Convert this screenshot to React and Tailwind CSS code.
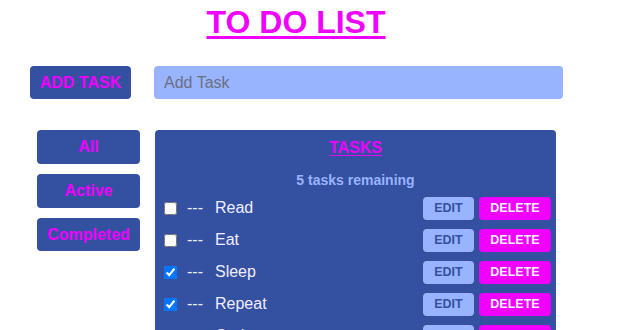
import React from "react";

const tasks = [
  { name: "Read", done: false },
  { name: "Eat", done: false },
  { name: "Sleep", done: true },
  { name: "Repeat", done: true },
  { name: "Code", done: false },
];

export default function App() {
  return (
    <div className="w-[629px] h-[330px] overflow-hidden bg-white" style={{ fontFamily: '"Liberation Sans", Arial, sans-serif' }}>
      <div className="w-[592px] flex justify-center pt-[4px]">
        <h1 className="text-[32px] font-bold leading-[37px] text-[#f000ff] underline decoration-[3px] underline-offset-[3px]">TO DO LIST</h1>
      </div>
      <div className="flex items-center mt-[25px] pl-[30px]">
        <button className="w-[101px] h-[33px] rounded-[4px] bg-[#3450a1] text-[#f000ff] font-bold text-[16px]">ADD TASK</button>
        <input
          className="ml-[23px] w-[409px] h-[33px] rounded-[4px] bg-[#99b4ff] pl-[10px] text-[16px] text-gray-700 placeholder:text-[#6b6f80] outline-none"
          placeholder="Add Task"
        />
      </div>
      <div className="flex mt-[31px] pl-[37px]">
        <div className="flex flex-col gap-[10px] w-[103px]">
          <button className="h-[34px] rounded-[4px] bg-[#3450a1] text-[#f000ff] font-bold text-[16px]">All</button>
          <button className="h-[34px] rounded-[4px] bg-[#3450a1] text-[#f000ff] font-bold text-[16px]">Active</button>
          <button className="h-[33px] rounded-[4px] bg-[#3450a1] text-[#f000ff] font-bold text-[16px]">Completed</button>
        </div>
        <div className="ml-[15px] w-[401px] h-[260px] rounded-t-[4px] bg-[#3450a1] pt-[9px]">
          <div className="flex justify-center">
            <span className="text-[16px] font-bold text-[#f000ff] underline underline-offset-[2px] leading-[18px]">TASKS</span>
          </div>
          <div className="text-center text-[14px] font-bold text-[#99b4ff] mt-[15px] leading-[16px]">5 tasks remaining</div>
          <div className="mt-[4px] flex flex-col">
            {tasks.map((t) => (
              <div key={t.name} className="h-[32px] flex items-center pr-[5px]">
                <input type="checkbox" defaultChecked={t.done} className="ml-[9px] w-[13px] h-[13px]" />
                <span className="ml-[10px] text-[16px] text-[#eeeeff]">---</span>
                <span className="ml-[12px] text-[16px] text-[#eeeeff]">{t.name}</span>
                <div className="ml-auto flex gap-[5px]">
                  <button className="w-[51px] h-[23px] rounded-[4px] bg-[#99b4ff] text-[#3450a1] font-bold text-[12.5px]">EDIT</button>
                  <button className="w-[72px] h-[23px] rounded-[4px] bg-[#f000ff] text-[#f4f0ff] font-bold text-[12.5px]">DELETE</button>
                </div>
              </div>
            ))}
          </div>
        </div>
      </div>
    </div>
  );
}
